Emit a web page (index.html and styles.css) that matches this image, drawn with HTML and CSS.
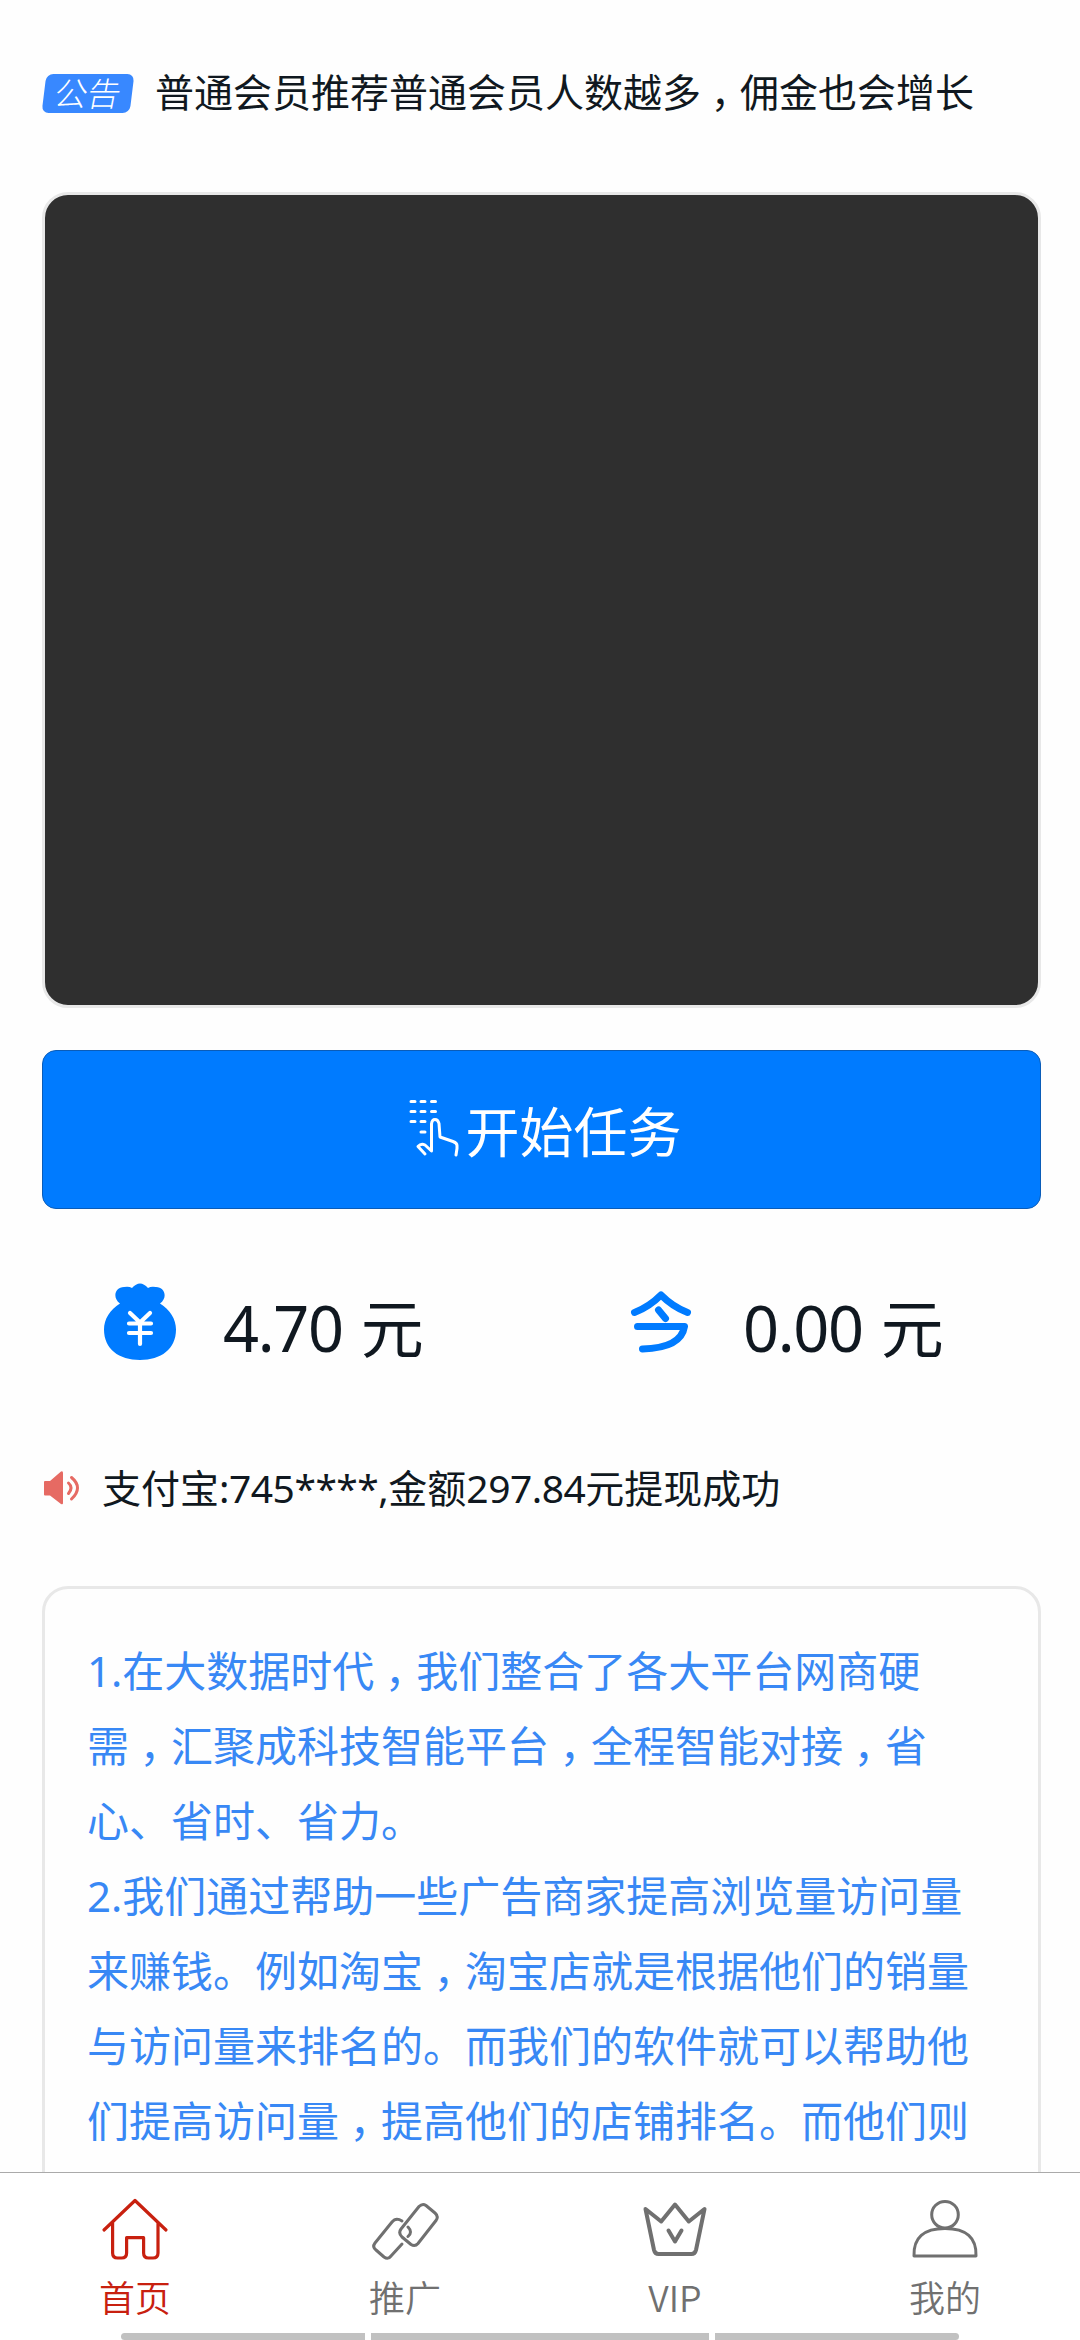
FILE: index.html
```html
<!DOCTYPE html>
<html lang="zh-CN">
<head>
<meta charset="utf-8">
<title>首页</title>
<link rel="stylesheet" href="styles.css">
</head>
<body>
<main class="page">
  <div class="notice">
    <span class="badge"><span class="badge-text">公告</span></span>
    <p class="notice-text">普通会员推荐普通会员人数越多<span class="comma">，</span>佣金也会增长</p>
  </div>
  <div class="banner"></div>
  <button class="start" type="button">
    <svg class="start-icon" viewBox="0 0 50 58" fill="none" stroke="#fff" stroke-width="3" stroke-linecap="round" stroke-linejoin="round">
      <path d="M2 2.500h4M12 2.500h4M22.500 2.500h4M2 12.500h4M12 12.500h4M22.500 12.500h4M2 22.500h4M12 22.500h4M12 33h4"/>
      <path d="M16 55l-7-7.500q3-3.500 7-1.500l6.500 6V25q.500-4.500 3.500-4.500t4 4l1 13.500 13 4.500q4 1.500 4 4v3l-1 6.500"/>
    </svg>
    <span>开始任务</span>
  </button>
  <section class="stats">
    <div class="stat">
      <svg class="stat-icon" viewBox="0 0 72 78">
        <path fill="#007bff" d="M16 20.500C8 15 11 4 20 4q5-1 8 1 8-9 16 0 3-2 8-1c9 0 12 11 4 16.500C66 27 72 36 72 46.500 72 66 57 77 36 77S0 66 0 46.500C0 36 6 27 16 20.500z"/>
        <path fill="none" stroke="#fff" stroke-width="4.200" stroke-linecap="round" stroke-linejoin="round" d="M26 30l10 9.500L46 30M25 40.500h22M25 50h22M36 40v21"/>
      </svg>
      <span class="amount">4.70 元</span>
    </div>
    <div class="stat">
      <svg class="stat-icon" viewBox="0 0 72 78" fill="none" stroke="#007bff" stroke-width="7" stroke-linecap="round" stroke-linejoin="round">
        <path d="M10.500 29.500Q25 24 37 12q12 12 26.500 17.500M34.500 27l7 8.500M13.500 43.500h47Q57 65 18.500 66"/>
      </svg>
      <span class="amount">0.00 元</span>
    </div>
  </section>
  <div class="payout">
    <svg class="speaker" viewBox="0 0 36 36">
      <path fill="#e66a63" d="M1 11h5L17 1.500Q19 .5 19 3v30q0 2-2 1L6 25.500H1q-1 0-1-1V12q0-1 1-1z"/>
      <path fill="none" stroke="#e66a63" stroke-width="3" stroke-linecap="round" d="M24.500 13q5 4.500 0 10.500M27.500 7.500q12 10 0 21.500"/>
    </svg>
    <p>支付宝<span class="num">:745****,</span>金额<span class="num">297.84</span>元提现成功</p>
  </div>
  <article class="rules">
    <p>1.在大数据时代<span class="comma">，</span>我们整合了各大平台网商硬<br>需<span class="comma">，</span>汇聚成科技智能平台<span class="comma">，</span>全程智能对接<span class="comma">，</span>省<br>心、省时、省力。</p>
    <p>2.我们通过帮助一些广告商家提高浏览量访问量<br>来赚钱。例如淘宝<span class="comma">，</span>淘宝店就是根据他们的销量<br>与访问量来排名的。而我们的软件就可以帮助他<br>们提高访问量<span class="comma">，</span>提高他们的店铺排名。而他们则</p>
  </article>
</main>
<nav class="tabs">
  <a class="tab active">
    <svg class="tab-icon" viewBox="0 0 72 72" stroke-width="3.200">
      <path d="M5 37L36 7.500 67 37M13.600 30v30q0 5 5 5h4q5 0 5-5V44.700h17V60q0 5 5 5H54q5 0 5-5V30"/>
    </svg>
    <span>首页</span>
  </a>
  <a class="tab">
    <svg class="tab-icon" viewBox="0 0 72 72" stroke-width="3">
      <path d="M33 28q-6-4-10 1L6 50q-3 4 1 7l8 7q4 3 7-1l11-12"/>
      <path d="M50 13.500q3.500-3.500 7-1l9 7.500q4 3.500 1 7.500L49 50.500q-3 3.500-7 1l-9-7.500q-4-4-1-8zM39 34q5 5 0 9.500"/>
    </svg>
    <span>推广</span>
  </a>
  <a class="tab">
    <svg class="tab-icon" viewBox="0 0 72 72" stroke-width="4">
      <path d="M6.500 16l15.700 12.500L36 11.500l13.800 17L65.500 16l-8.500 41q-1 4-4.500 4h-33q-3.500 0-4.500-4zM29.500 37.500l6.500 11 6.500-11"/>
    </svg>
    <span>VIP</span>
  </a>
  <a class="tab">
    <svg class="tab-icon" viewBox="0 0 72 72" stroke-width="3">
      <circle cx="36" cy="21.700" r="13.300"/>
      <path d="M5 63q-1-27.500 31-27.500t31 27.500z"/>
    </svg>
    <span>我的</span>
  </a>
  <div class="gesture"><i></i><i></i><i></i></div>
</nav>
</body>
</html>
```

FILE: styles.css
```css
* { box-sizing: border-box; }
body, p { margin: 0; }
body {
  height: 2340px;
  overflow: hidden;
  display: flex;
  flex-direction: column;
  background: #fefefe;
  color: #101820;
  font-family: "Noto Sans", "Noto Sans CJK SC", sans-serif;
}
.page { flex: 1; min-height: 0; overflow: hidden; padding: 63px 39px 0 42px; }
.comma { font-feature-settings: "halt"; padding: 0 .25em; }
.notice { display: flex; align-items: center; height: 60px; font-size: 39px; white-space: nowrap; }
.notice-text { line-height: 56px; margin-bottom: 2px; }
.badge {
  width: 88px;
  height: 39px;
  margin: 0 23px 0 2px;
  border-radius: 7px;
  background: #3888ff;
  color: #fff;
  transform: skewX(-7deg);
  display: grid;
  place-items: center;
}
.badge-text { font-family: "Noto Sans CJK SC", sans-serif; font-size: 33px; font-weight: 300; line-height: 35px; padding-bottom: 2px; transform: skewX(-4deg); }
.banner { height: 816px; margin-top: 69px; border: 3px solid #e8e8e8; border-radius: 26px; background: #2f2f2f; }
.start {
  width: 100%;
  height: 159px;
  margin-top: 42px;
  padding: 0 0 0 7px;
  border: 1px solid #0a5cb8;
  border-radius: 14px;
  background: #007bff;
  color: #fff;
  font: 54px "Noto Sans CJK SC", sans-serif;
  display: flex;
  align-items: center;
  justify-content: center;
  gap: 7px;
}
.start-icon { width: 50px; height: 58px; margin-bottom: 4px; }
.stats { display: flex; padding-left: 62px; margin-top: 74px; height: 78px; }
.stat { display: flex; flex: none; gap: 47px; width: 520px; white-space: nowrap; }
.stat-icon { width: 72px; height: 78px; }
.amount { font-size: 63px; line-height: 78px; letter-spacing: -1.3px; word-spacing: 3px; padding-top: 6px; }
.payout { display: flex; align-items: center; gap: 22px; height: 60px; margin-top: 97px; font-size: 39px; }
.payout p { margin-bottom: 4px; }
.num { letter-spacing: -.5px; }
.speaker { width: 36px; height: 36px; margin-left: 2px; }
.rules {
  height: 700px;
  margin-top: 68px;
  border: 3px solid #e8e8e8;
  border-radius: 26px;
  padding: 44px 0 0 42px;
  color: #3888f5;
  font-size: 42px;
  line-height: 75px;
  white-space: nowrap;
}
.tabs {
  height: 168px;
  border-top: 1px solid #aaa;
  display: grid;
  grid-template-columns: repeat(4, 1fr);
  grid-template-rows: 160px 7px;
  background: #fff;
}
.tab {
  display: flex;
  flex-direction: column;
  align-items: center;
  padding-top: 20px;
  color: #707070;
  font: 350 36px/52px "Noto Sans CJK SC", sans-serif;
}
.tab-icon { width: 72px; height: 72px; fill: none; stroke: currentColor; stroke-linecap: round; stroke-linejoin: round; margin-bottom: 5px; }
.active { color: #c8200f; }
.gesture { grid-column: 1 / -1; display: grid; grid-template-columns: 244px 338px 244px; gap: 6px; padding: 0 121px; }
.gesture i { background: #c1c1c1; }
.gesture i:first-child { border-radius: 4px 0 0 4px; }
.gesture i:last-child { border-radius: 0 4px 4px 0; }
```
